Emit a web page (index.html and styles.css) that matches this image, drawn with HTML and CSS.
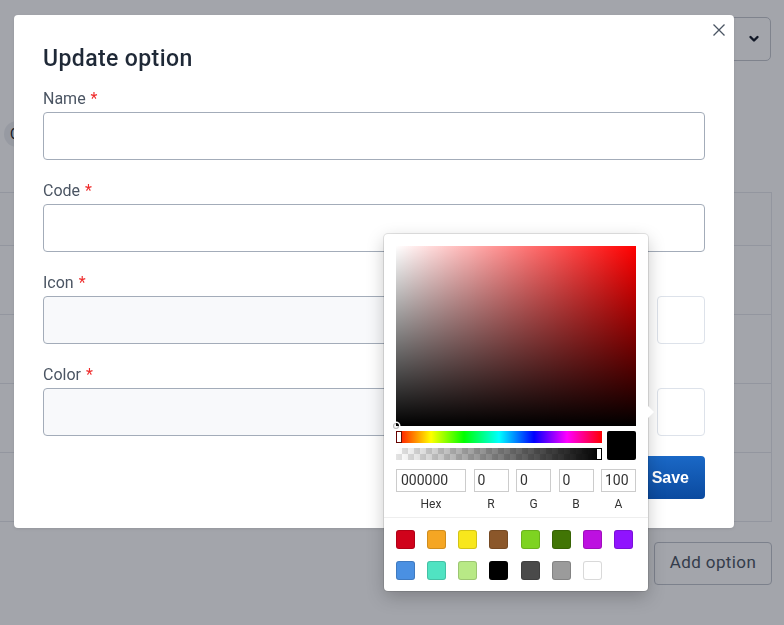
FILE: index.html
```html
<!DOCTYPE html>
<html>
<head>
<meta charset="utf-8">
<title>Update option</title>
<link rel="stylesheet" href="styles.css">
</head>
<body>
<div class="page">
  <div class="topbar">
    <div class="select-btn">
      <svg width="12" height="8" viewBox="0 0 12 8"><path d="M2.5 2l3.5 3.5 3.5-3.5" fill="none" stroke="#111827" stroke-width="2.4" stroke-linecap="round" stroke-linejoin="round"/></svg>
    </div>
  </div>
  <div class="chip-row"><span class="chip">C</span></div>
  <div class="table">
    <div class="row head"></div>
    <div class="row"></div>
    <div class="row"></div>
    <div class="row"></div>
    <div class="row"></div>
  </div>
  <div class="actions"><button class="add-btn">Add option</button></div>
</div>

<div class="overlay">
  <div class="modal">
    <button class="close" aria-label="Close">
      <svg width="12" height="12" viewBox="0 0 12 12"><path d="M0.5 0.5l11 11M11.5 0.5l-11 11" fill="none" stroke="#4b5563" stroke-width="1.3"/></svg>
    </button>
    <h2 class="title">Update option</h2>

    <div class="field">
      <label class="label">Name <span class="req">*</span></label>
      <div class="input"></div>
    </div>
    <div class="field">
      <label class="label">Code <span class="req">*</span></label>
      <div class="input"></div>
    </div>
    <div class="field">
      <label class="label">Icon <span class="req">*</span></label>
      <div class="input-row">
        <div class="input readonly"></div>
        <div class="preview"></div>
      </div>
    </div>
    <div class="field">
      <label class="label">Color <span class="req">*</span></label>
      <div class="input-row">
        <div class="input readonly"></div>
        <div class="preview"></div>
      </div>
    </div>

    <div class="footer"><button class="save">Save</button></div>

    <div class="picker">
      <div class="saturation"><span class="sat-pointer"></span></div>
      <div class="controls">
        <div class="sliders">
          <div class="hue"><span class="hue-handle"></span></div>
          <div class="alpha"><span class="alpha-handle"></span></div>
        </div>
        <div class="current"></div>
      </div>
      <div class="fields">
        <div class="fcol hex"><div class="finput">000000</div><div class="flabel">Hex</div></div>
        <div class="fcol"><div class="finput">0</div><div class="flabel">R</div></div>
        <div class="fcol"><div class="finput">0</div><div class="flabel">G</div></div>
        <div class="fcol"><div class="finput">0</div><div class="flabel">B</div></div>
        <div class="fcol"><div class="finput">100</div><div class="flabel">A</div></div>
      </div>
      <div class="presets">
        <span class="sw" style="background:#D0021B"></span>
        <span class="sw" style="background:#F5A623"></span>
        <span class="sw" style="background:#F8E71C"></span>
        <span class="sw" style="background:#8B572A"></span>
        <span class="sw" style="background:#7ED321"></span>
        <span class="sw" style="background:#417505"></span>
        <span class="sw" style="background:#BD10E0"></span>
        <span class="sw" style="background:#9013FE"></span>
        <span class="sw" style="background:#4A90E2"></span>
        <span class="sw" style="background:#50E3C2"></span>
        <span class="sw" style="background:#B8E986"></span>
        <span class="sw" style="background:#000000"></span>
        <span class="sw" style="background:#4A4A4A"></span>
        <span class="sw" style="background:#9B9B9B"></span>
        <span class="sw" style="background:#FFFFFF"></span>
      </div>
    </div>
  </div>
</div>
</body>
</html>
```

FILE: styles.css
```css
* { box-sizing: border-box; }
html, body { margin: 0; padding: 0; }
body {
  width: 784px;
  height: 625px;
  overflow: hidden;
  background: #ffffff;
  font-family: Roboto, "Liberation Sans", Arial, sans-serif;
  color: #1f2937;
}

/* background page */
.page {
  padding-top: 17px;
  display: flex;
  flex-direction: column;
}
.topbar {
  display: flex;
  justify-content: flex-end;
  padding-right: 13px;
}
.select-btn {
  width: 90px;
  height: 44px;
  border: 1px solid #c4c8cf;
  border-radius: 5px;
  display: flex;
  align-items: center;
  justify-content: flex-end;
  padding-right: 10px;
}
.chip-row {
  margin-top: 60px;
  padding-left: 4px;
  height: 26px;
}
.chip {
  display: inline-flex;
  align-items: center;
  width: 40px;
  height: 26px;
  border-radius: 13px;
  background: #eceef1;
  font-size: 14px;
  color: #111827;
  padding-left: 6px;
}
.table {
  margin-top: 45px;
  margin-right: 12px;
  border-top: 1px solid #e5e7eb;
  border-right: 1px solid #e5e7eb;
}
.row {
  height: 69px;
  border-bottom: 1px solid #e5e7eb;
}
.row.head { height: 53px; background: #fdfdfe; }
.actions {
  display: flex;
  justify-content: flex-end;
  padding-right: 12px;
  margin-top: 20px;
}
.add-btn {
  width: 118px;
  height: 43px;
  border: 1px solid #c0c4cc;
  border-radius: 4px;
  background: transparent;
  font-family: Roboto, "Liberation Sans", Arial, sans-serif;
  font-size: 17px;
  letter-spacing: 0.4px;
  color: #4b5563;
  padding: 0 0 3px;
}

/* overlay + modal */
.overlay {
  position: fixed;
  inset: 0;
  background: rgba(17, 24, 39, 0.39);
}
.modal {
  position: absolute;
  left: 14px;
  top: 15px;
  width: 720px;
  background: #fff;
  border-radius: 4px;
  padding: 29px;
  box-shadow: 0 1px 3px rgba(0,0,0,0.1);
}
.close {
  position: absolute;
  right: 9px;
  top: 9px;
  width: 12px;
  height: 12px;
  border: 0;
  padding: 0;
  background: transparent;
  display: block;
}
.close svg { display: block; }
.title {
  margin: 0 0 15px;
  font-size: 23px;
  letter-spacing: 0.4px;
  line-height: 29px;
  font-weight: 500;
  color: #1f2937;
}
.field { margin-bottom: 20px; }
.label {
  display: block;
  font-size: 16px;
  line-height: 22px;
  color: #4b5563;
  margin-bottom: 2px;
}
.req { color: #ef2b2b; margin-left: 1px; }
.input {
  height: 48px;
  border: 1px solid #a3acb9;
  border-radius: 4px;
  background: #fff;
}
.input.readonly { background: #f8f9fb; }
.input-row {
  display: flex;
  gap: 10px;
}
.input-row .input { flex: 1; }
.preview {
  width: 48px;
  height: 48px;
  border: 1px solid #dde2ea;
  border-radius: 4px;
  background: #fff;
}
.footer {
  display: flex;
  justify-content: flex-end;
}
.save {
  height: 43px;
  padding: 0 16px 0 20px;
  border: 0;
  border-radius: 4px;
  background: linear-gradient(#1a68c6, #0b4a9f);
  color: #fff;
  font-family: "Liberation Sans", Arial, sans-serif;
  font-weight: 700;
  font-size: 16px;
}

/* color picker popover */
.picker {
  position: absolute;
  left: 370px;
  top: 219px;
  width: 264px;
  background: #fff;
  border-radius: 4px;
  padding: 12px 12px 11px;
  box-shadow: 0 0 0 1px rgba(0,0,0,0.1), 0 6px 18px rgba(0,0,0,0.22);
}
.picker::after {
  content: "";
  position: absolute;
  right: -6px;
  top: 172px;
  border-style: solid;
  border-width: 6px 0 6px 6px;
  border-color: transparent transparent transparent #fff;
}
.saturation {
  position: relative;
  width: 240px;
  height: 180px;
  background:
    linear-gradient(to top, #000, rgba(0,0,0,0)),
    linear-gradient(to right, #fff, rgba(255,255,255,0)),
    #ff0000;
}
.sat-pointer {
  position: absolute;
  left: -3px;
  bottom: -3px;
  width: 6px;
  height: 6px;
  border-radius: 50%;
  box-shadow: 0 0 0 1.5px #fff, inset 0 0 1px 1px rgba(0,0,0,0.3);
}
.controls {
  display: flex;
  gap: 5px;
  margin-top: 5px;
}
.sliders {
  width: 206px;
  display: flex;
  flex-direction: column;
  gap: 5px;
}
.hue {
  position: relative;
  height: 12px;
  background: linear-gradient(to right, #f00 0%, #ff0 17%, #0f0 33%, #0ff 50%, #00f 67%, #f0f 83%, #f00 100%);
}
.hue-handle, .alpha-handle {
  position: absolute;
  top: 1px;
  width: 4px;
  height: 10px;
  background: #fff;
  box-shadow: 0 0 0 1px rgba(0,0,0,0.6);
}
.hue-handle { left: 1px; }
.alpha-handle { right: 1px; }
.alpha {
  position: relative;
  height: 12px;
  background:
    linear-gradient(to right, rgba(0,0,0,0), #000),
    repeating-conic-gradient(#e3e3e3 0 25%, #fff 0 50%) 0 0 / 12px 12px;
}
.current {
  width: 29px;
  height: 29px;
  background: #000;
  border-radius: 2px;
}
.fields {
  display: flex;
  justify-content: space-between;
  margin-top: 9px;
  padding-bottom: 6px;
}
.fcol { width: 35px; }
.fcol.hex { width: 70px; }
.finput {
  height: 23px;
  border: 1px solid #cccccc;
  font-size: 14px;
  line-height: 21px;
  color: #333;
  padding-left: 3px;
}
.hex .finput { padding-left: 4px; }
.flabel {
  margin-top: 5px;
  font-size: 12px;
  line-height: 14px;
  color: #333;
  text-align: center;
}
.presets {
  margin: 0 -12px;
  padding: 12px 12px 0 12px;
  border-top: 1px solid #eeeeee;
  display: grid;
  grid-template-columns: repeat(8, 19px);
  column-gap: 12.15px;
  row-gap: 12px;
}
.sw {
  width: 19px;
  height: 19px;
  border-radius: 3px;
  box-shadow: inset 0 0 0 1px rgba(0,0,0,0.15);
}
```
